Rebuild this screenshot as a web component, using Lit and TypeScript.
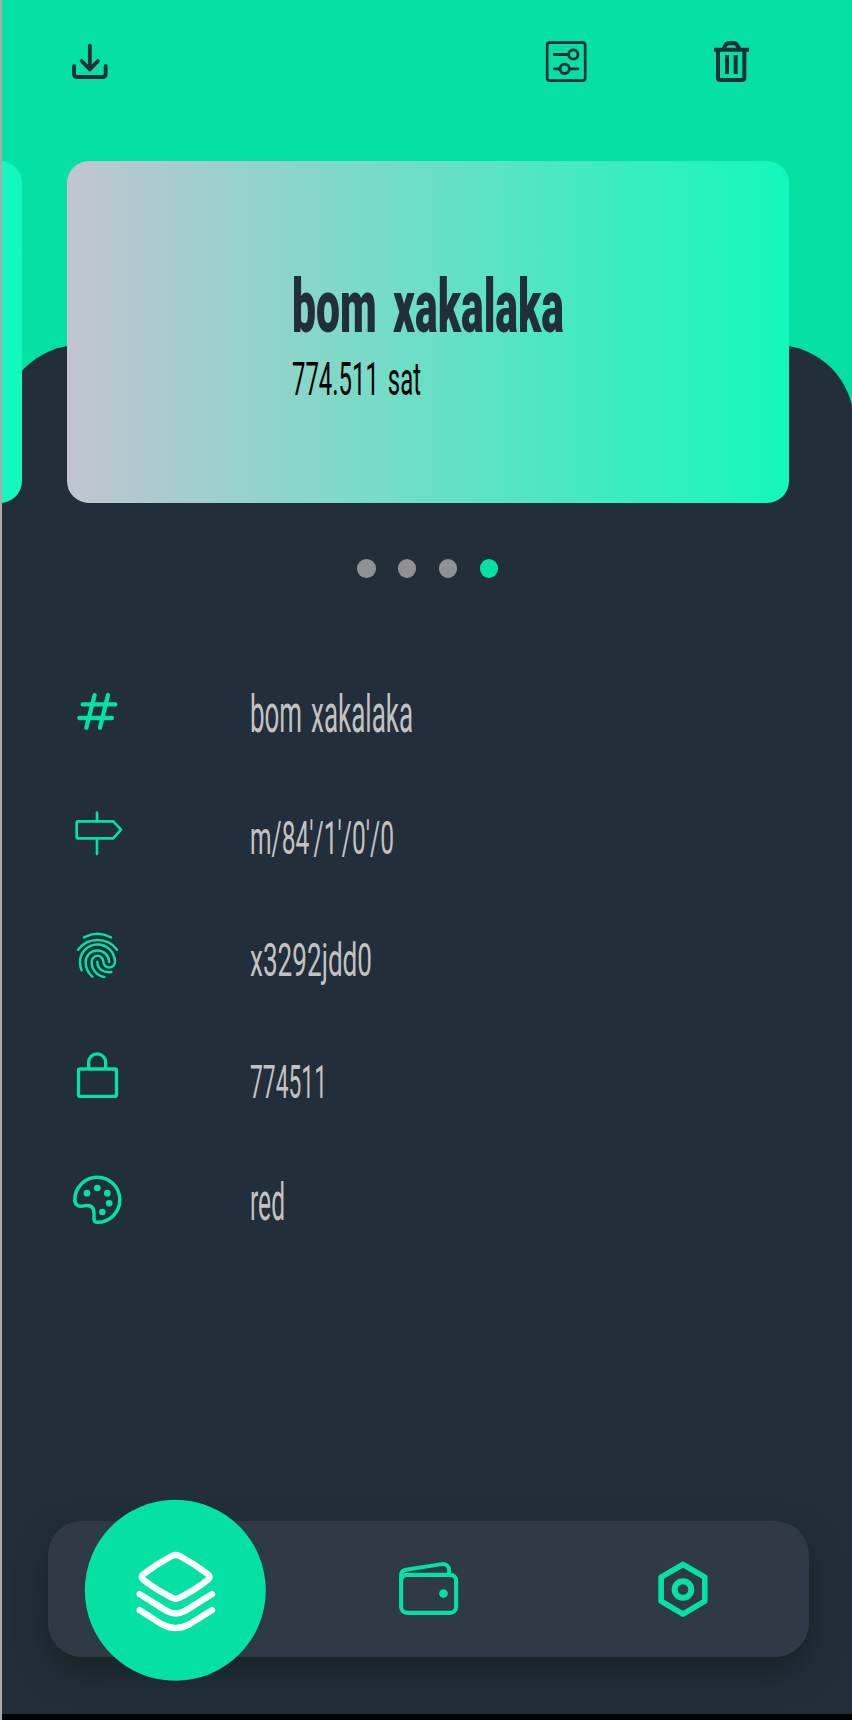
import { LitElement, html, svg, css } from "lit";
import { customElement, property } from "lit/decorators.js";

/* Icon artwork is drawn on a grid three times finer than the screen size. */
const ICONS: Record<string, { box: string; art: unknown }> = {
  download: {
    box: "210 126 120 120",
    art: svg`<g stroke-width="11.500"><path d="M269.500 137V208M245 183l24.500 25 24.500-25M222 198v23q0 10 10 10h75q10 0 10-10v-23"/></g>`,
  },
  sliders: {
    box: "72 60 132 132",
    art: svg`<g stroke-width="8.500"><rect x="81.500" y="68" width="114" height="114" rx="8" stroke-width="8"/><circle cx="160" cy="103.500" r="14"/><circle cx="134" cy="146.500" r="14"/><path d="M103 103.500H146M103 146.500H120M148 146.500H174"/></g>`,
  },
  trash: {
    box: "570 60 132 132",
    art: svg`<g stroke-width="12" stroke-linecap="butt"><path d="M582 89H687M594 90v83q0 7 7 7h65q7 0 7-7V90M611 86l6-11q2-5 8-5h18q6 0 8 5l7 11M621 106v56M647 106v56"/></g>`,
  },
  hash: {
    box: "51 66 180 180",
    art: svg`<path stroke-width="13" d="M134 105L109 203M174 105L150 203M98 133H196M88 174H186"/>`,
  },
  signpost: {
    box: "51 432 180 180",
    art: svg`<path stroke-width="8" d="M84 484H190L213 509 190 535H84q-4 0-4-4V488q0-4 4-4zM141 458V483M141 535V582"/>`,
  },
  fingerprint: {
    box: "51 78 180 180",
    art: svg`<g stroke-width="7.500"><path d="M102 112Q142 91 183 112M84 149A74 74 0 0 1 201 149"/><path d="M95 211Q90 200 90 187A52.500 52.500 0 0 1 195 185A17.500 17.500 0 0 1 160 185A17.500 17.500 0 0 0 125 185C125 208 140 228 163 231"/><path d="M127 230Q107 212 107 187A35 35 0 0 1 177.500 186M142 185C142 207 160 219 184 216"/></g>`,
  },
  lock: {
    box: "51 444 180 180",
    art: svg`<g stroke-width="10"><rect x="85.500" y="507" width="114" height="82" rx="5"/><path d="M116 505V487a25.500 25.500 0 0 1 51 0v18"/></g>`,
  },
  palette: {
    box: "51 90 180 180",
    art: svg`<path stroke-width="10.500" d="M74.500 180A67.500 67.500 0 1 1 142 247q-10 0-10-10V218C132 200 118 194 104 197C88 202 74 196 74.500 180z"/><g fill="currentColor" stroke="none"><circle cx="111" cy="159.500" r="10"/><circle cx="142" cy="144" r="10"/><circle cx="172" cy="159.500" r="10"/><circle cx="177.500" cy="190" r="10"/><circle cx="157" cy="216" r="10"/></g>`,
  },
  layers: {
    box: "376.500 180 300 300",
    art: svg`<path stroke-width="19" d="M516 228Q526 223 537 228Q585 254 624 284Q631 291 624 299Q585 330 537 354Q526 360 516 354Q468 330 428 299Q421 291 428 284Q468 253 516 228zM418 343L498 393Q526 409 555 393L635 343M418 391L484 433Q526 456 568 433L635 391"/>`,
  },
  wallet: {
    box: "56 150 240 240",
    art: svg`<rect stroke-width="12.500" x="93" y="225" width="165" height="114" rx="18"/><path stroke-width="12" d="M93 243V227Q93 213 107 210L215 193Q237 192 237 213V222"/><circle cx="220" cy="281" r="13" fill="currentColor" stroke="none"/>`,
  },
  nut: {
    box: "817 150 240 240",
    art: svg`<path stroke-width="17" d="M937.500 194L1003 232V304L937.500 343 872 304V232z"/><circle cx="937.500" cy="269" r="25" stroke-width="18"/>`,
  },
};

@customElement("line-icon")
export class LineIcon extends LitElement {
  @property() name = "";
  static styles = css`
    :host { display: block; }
    svg { display: block; width: 100%; height: 100%; }
  `;
  render() {
    const icon = ICONS[this.name];
    return html`<svg viewBox=${icon.box} fill="none" stroke="currentColor" stroke-linecap="round" stroke-linejoin="round">${icon.art}</svg>`;
  }
}

/* Single line of text condensed to a given width. */
@customElement("narrow-text")
export class NarrowText extends LitElement {
  @property() text = "";
  @property({ type: Number }) width = 100;
  @property({ type: Number }) height = 60;
  @property({ type: Number }) baseline = 50;
  static styles = css`
    :host { display: block; }
    svg { display: block; overflow: visible; }
    text { fill: currentColor; }
  `;
  render() {
    return html`<svg width=${this.width} height=${this.height}>
      <text x="0" y=${this.baseline} textLength=${this.width} lengthAdjust="spacingAndGlyphs">${this.text}</text>
    </svg>`;
  }
}

@customElement("app-root")
export class AppRoot extends LitElement {
  static styles = css`
    :host {
      display: block;
      font-family: Roboto, "Liberation Sans", sans-serif;
    }
    .page {
      box-sizing: border-box;
      height: 1720px;
      border-left: 2px solid #aaa;
      background: #04e1a3;
      display: flex;
      flex-direction: column;
      overflow: hidden;
    }
    .header {
      box-sizing: border-box;
      height: 161px;
      padding: 40px 98px 0 68px;
      display: flex;
      align-items: flex-start;
      color: #222e3a;
    }
    .download { width: 40px; height: 40px; margin: 2px auto 0 0; }
    .tool { width: 44px; height: 44px; }
    .tool + .tool { margin-left: 122px; }
    .carousel {
      position: relative;
      z-index: 1;
      display: flex;
      gap: 45px;
      height: 342px;
      margin: 0 0 -158.500px -702px;
    }
    .card {
      box-sizing: border-box;
      flex: 0 0 722px;
      border-radius: 22px;
      padding: 105px 0 0 225px;
      background: linear-gradient(90deg, #c1c5d0, #13f8bc);
    }
    .title { font-size: 75px; font-weight: 900; color: #222e3a; word-spacing: 10px; }
    .amount { font-size: 47px; color: #000; word-spacing: 6px; }
    .panel {
      box-sizing: border-box;
      flex: 0 0 1369.500px;
      display: flex;
      flex-direction: column;
      margin-right: -2px;
      border-radius: 78px 78px 0 0;
      padding: 216px 45px 57px 46px;
      background: #222e3a;
    }
    .dots {
      display: flex;
      gap: 22.400px;
      margin: -1.500px 0 0 309px;
    }
    .dot { width: 18.500px; height: 18.500px; border-radius: 50%; background: #919191; }
    .dot.active { background: #04e1a3; }
    .rows { margin: 73.500px 0 0 19px; }
    .row { height: 122px; display: flex; align-items: center; gap: 123px; }
    .row line-icon { width: 60px; height: 60px; color: #04e1a3; }
    .row narrow-text { font-size: 47px; color: #c2c2c2; }
    .row .letters { font-size: 51px; word-spacing: 5px; }
    .nav {
      height: 136px;
      margin-top: auto;
      border-radius: 34px;
      background: #2f3a46;
      box-shadow: 0 15px 30px rgba(20, 30, 28, 0.65);
      display: grid;
      grid-template-columns: repeat(3, 1fr);
      place-items: center;
      color: #04e1a3;
    }
    .nav > * { transform: translate(0.800px, 0.800px); }
    .tab { width: 80px; height: 80px; }
    .current {
      width: 181px;
      height: 181px;
      margin: -23px 0;
      border-radius: 50%;
      background: #04e1a3;
      color: #fff;
      display: grid;
      place-items: center;
    }
    .current line-icon { width: 100px; height: 100px; }
    .footer { flex: 1; background: #000; }
  `;

  rows = [
    { icon: "hash", text: "bom xakalaka", width: 163, style: "letters" },
    { icon: "signpost", text: "m/84'/1'/0'/0", width: 144, style: "digits" },
    { icon: "fingerprint", text: "x3292jdd0", width: 122, style: "digits" },
    { icon: "lock", text: "774511", width: 77, style: "digits" },
    { icon: "palette", text: "red", width: 35, style: "letters" },
  ];

  render() {
    return html`<div class="page">
      <div class="header">
        <line-icon class="download" name="download"></line-icon>
        <line-icon class="tool" name="sliders"></line-icon>
        <line-icon class="tool" name="trash"></line-icon>
      </div>
      <div class="carousel">
        <div class="card"></div>
        <div class="card">
          <narrow-text class="title" text="bom xakalaka" width="272" height="80" baseline="66"></narrow-text>
          <narrow-text class="amount" text="774.511 sat" width="129" height="60" baseline="49"></narrow-text>
        </div>
      </div>
      <div class="panel">
        <div class="dots">
          ${[0, 1, 2, 3].map((i) => html`<div class="dot ${i === 3 ? "active" : ""}"></div>`)}
        </div>
        <div class="rows">
          ${this.rows.map(
            (r) => html`<div class="row">
              <line-icon name=${r.icon}></line-icon>
              <narrow-text class=${r.style} text=${r.text} .width=${r.width} height="60" baseline="49.500"></narrow-text>
            </div>`
          )}
        </div>
        <div class="nav">
          <div class="current"><line-icon name="layers"></line-icon></div>
          <line-icon class="tab" name="wallet"></line-icon>
          <line-icon class="tab" name="nut"></line-icon>
        </div>
      </div>
      <div class="footer"></div>
    </div>`;
  }
}
